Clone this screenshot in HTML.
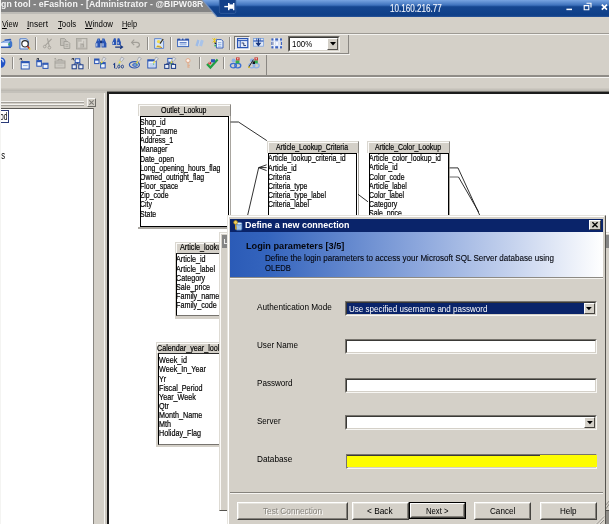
<!DOCTYPE html>
<html><head><meta charset="utf-8"><title>Define a new connection</title>
<style>
html,body{margin:0;padding:0;}
body{width:609px;height:524px;overflow:hidden;position:relative;background:#d4d0c8;font-family:"Liberation Sans",sans-serif;font-size:9px;color:#000;}
div,span{box-sizing:border-box;}
svg{position:absolute;overflow:visible;}
</style></head><body>
<div style="position:absolute;left:0;top:0;width:609px;height:524px;overflow:hidden;will-change:transform;">
<div style="position:absolute;left:0px;top:0px;width:609px;height:12px;background:#848484;"></div>
<div style="position:absolute;left:0px;top:12px;width:609px;height:2px;background:#bdbbb6;"></div>
<span id="t0" style="position:absolute;left:1px;top:0.46px;font-size:8.6px;line-height:9.89px;font-weight:bold;color:#f4f4f4;white-space:nowrap;transform-origin:0 0;transform:scaleX(1.0142);letter-spacing:0.1px;">gn tool - eFashion - [Administrator - @BIPW08R</span>
<span id="t1" style="position:absolute;left:2px;top:19.35px;font-size:9.3px;line-height:10.70px;font-weight:normal;color:#000;white-space:nowrap;transform-origin:0 0;transform:scaleX(0.8000);"><u>V</u>iew</span>
<span id="t2" style="position:absolute;left:27px;top:19.35px;font-size:9.3px;line-height:10.70px;font-weight:normal;color:#000;white-space:nowrap;transform-origin:0 0;transform:scaleX(0.9026);"><u>I</u>nsert</span>
<span id="t3" style="position:absolute;left:58px;top:19.35px;font-size:9.3px;line-height:10.70px;font-weight:normal;color:#000;white-space:nowrap;transform-origin:0 0;transform:scaleX(0.8288);"><u>T</u>ools</span>
<span id="t4" style="position:absolute;left:85px;top:19.35px;font-size:9.3px;line-height:10.70px;font-weight:normal;color:#000;white-space:nowrap;transform-origin:0 0;transform:scaleX(0.8465);"><u>W</u>indow</span>
<span id="t5" style="position:absolute;left:122px;top:19.35px;font-size:9.3px;line-height:10.70px;font-weight:normal;color:#000;white-space:nowrap;transform-origin:0 0;transform:scaleX(0.7837);"><u>H</u>elp</span>
<div style="position:absolute;left:0px;top:33px;width:609px;height:1px;background:#9d9a94;"></div>
<div style="position:absolute;left:0px;top:34px;width:609px;height:1px;background:#f4f3f0;"></div>
<div style="position:absolute;left:-2px;top:35px;width:351px;height:19px;border-right:1px solid #8a8782;border-bottom:1px solid #8a8782;"></div>
<div style="position:absolute;left:-2px;top:54px;width:352px;height:1px;background:#f4f3f0;"></div>
<div style="position:absolute;left:-2px;top:55px;width:269px;height:20px;border-right:1px solid #8a8782;"></div>
<div style="position:absolute;left:0px;top:75px;width:609px;height:2px;background:#8f8c87;"></div>
<div style="position:absolute;left:0px;top:77px;width:609px;height:1px;background:#f6f5f2;"></div>
<div style="position:absolute;left:0px;top:88px;width:609px;height:3px;background:linear-gradient(#d0ccc4,#b8b5ae);"></div>
<div style="position:absolute;left:0px;top:91px;width:107px;height:1.5px;background:#c4c1ba;"></div>
<div style="position:absolute;left:107px;top:91px;width:502px;height:2px;background:#77756f;"></div>
<div style="position:absolute;left:35px;top:36.6px;width:1px;height:13px;background:#8f8c87;"></div>
<div style="position:absolute;left:36px;top:36.6px;width:1px;height:13px;background:#f8f7f4;"></div>
<div style="position:absolute;left:146.5px;top:36.6px;width:1px;height:13px;background:#8f8c87;"></div>
<div style="position:absolute;left:147.5px;top:36.6px;width:1px;height:13px;background:#f8f7f4;"></div>
<div style="position:absolute;left:170.3px;top:36.6px;width:1px;height:13px;background:#8f8c87;"></div>
<div style="position:absolute;left:171.3px;top:36.6px;width:1px;height:13px;background:#f8f7f4;"></div>
<div style="position:absolute;left:229.3px;top:36.6px;width:1px;height:13px;background:#8f8c87;"></div>
<div style="position:absolute;left:230.3px;top:36.6px;width:1px;height:13px;background:#f8f7f4;"></div>
<div style="position:absolute;left:11.6px;top:57.4px;width:1px;height:12px;background:#8f8c87;"></div>
<div style="position:absolute;left:12.6px;top:57.4px;width:1px;height:12px;background:#f8f7f4;"></div>
<div style="position:absolute;left:88px;top:57.4px;width:1px;height:12px;background:#8f8c87;"></div>
<div style="position:absolute;left:89px;top:57.4px;width:1px;height:12px;background:#f8f7f4;"></div>
<div style="position:absolute;left:198.8px;top:57.4px;width:1px;height:12px;background:#8f8c87;"></div>
<div style="position:absolute;left:199.8px;top:57.4px;width:1px;height:12px;background:#f8f7f4;"></div>
<div style="position:absolute;left:223.2px;top:57.4px;width:1px;height:12px;background:#8f8c87;"></div>
<div style="position:absolute;left:224.2px;top:57.4px;width:1px;height:12px;background:#f8f7f4;"></div>
<div style="position:absolute;left:288px;top:36px;width:52px;height:16px;background:#fff;border:1px solid;border-color:#6f6d68 #f2f1ee #f2f1ee #6f6d68;"></div>
<div style="position:absolute;left:289px;top:37px;width:50px;height:14px;border:1px solid;border-color:#3c3b38 #d4d0c8 #d4d0c8 #3c3b38;"></div>
<div style="position:absolute;left:327px;top:38px;width:11px;height:12px;background:#d4d0c8;border:1px solid;border-color:#fff #55534f #55534f #fff;"></div>
<svg style="left:330px;top:42px" width="6" height="4"><path d="M0 0H6L3 3.4Z" fill="#000"/></svg>
<span id="t6" style="position:absolute;left:292px;top:38.53px;font-size:9px;line-height:10.35px;font-weight:normal;color:#000;white-space:nowrap;transform-origin:0 0;transform:scaleX(0.8771);">100%</span>
<div style="position:absolute;left:233.8px;top:35.6px;width:16.4px;height:14.8px;background:#e7e8ec;border:1px solid;border-color:#77756f #fbfaf8 #fbfaf8 #77756f;"></div>
<div style="position:absolute;left:0px;top:93px;width:104px;height:431px;background:#d4d0c8;"></div>
<div style="position:absolute;left:0px;top:100.6px;width:84px;height:2.4px;background:#f3f2ef;border-bottom:1px solid #a3a09a;"></div>
<div style="position:absolute;left:0px;top:104px;width:84px;height:2.4px;background:#f3f2ef;border-bottom:1px solid #a3a09a;"></div>
<div style="position:absolute;left:87px;top:98px;width:9px;height:9px;border:1px solid;border-color:#f6f5f2 #6e6c67 #6e6c67 #f6f5f2;"></div>
<svg style="left:89px;top:100px" width="5" height="5"><path d="M0.3 0.3L4.7 4.7M4.7 0.3L0.3 4.7" stroke="#7d7b76" stroke-width="1.1"/></svg>
<div style="position:absolute;left:-2px;top:108px;width:96px;height:420px;background:#fff;border:1px solid #8a8782;border-top-color:#5c5a56;"></div>
<div style="position:absolute;left:-2px;top:109.6px;width:11.2px;height:13.4px;background:#fff;border:1px solid #2a3a78;"></div>
<span id="t7" style="position:absolute;left:0.3px;top:110.27px;font-size:11px;line-height:12.65px;font-weight:normal;color:#000;white-space:nowrap;transform-origin:0 0;transform:scaleX(0.6041);">od</span>
<span id="t8" style="position:absolute;left:-0.6px;top:149.75px;font-size:10px;line-height:11.50px;font-weight:normal;color:#000;white-space:nowrap;transform-origin:0 0;transform:scaleX(0.7711);">ıs</span>
<div style="position:absolute;left:104px;top:93px;width:1px;height:431px;background:#f6f5f2;"></div>
<div style="position:absolute;left:105px;top:93px;width:2px;height:431px;background:#cbc7bf;"></div>
<div style="position:absolute;left:107px;top:92px;width:510px;height:440px;background:#fff;border:2px solid #1c1c1c;"></div>
<div style="position:absolute;left:138px;top:103.5px;width:92.5px;height:125.6px;overflow:hidden;"><div style="position:absolute;left:0;top:0;width:92.5px;height:12.5px;background:#d4d0c8;border-left:1px solid #dad7d0;border-top:1px solid #dad7d0;border-right:1px solid #8a8782;box-shadow:inset 1px 1px 0 #fbfaf8;"></div><div style="position:absolute;left:2px;top:12.5px;width:89.4px;height:111.1px;background:#fff;border:1px solid #000;border-width:1.3px 1px 1px 1.5px;"></div><div style="position:absolute;left:0;top:123.6px;width:92.5px;height:1.5px;background:#a9a6a0;"></div><div style="position:absolute;left:91.5px;top:12.5px;width:1.3px;height:112.1px;background:#a9a6a0;"></div></div>
<span id="t9" style="position:absolute;left:160.5px;top:104.98px;font-size:9px;line-height:10.35px;font-weight:normal;color:#000;white-space:nowrap;transform-origin:0 0;transform:scaleX(0.7772);-webkit-text-stroke:0.2px #000;">Outlet_Lookup</span>
<span id="t10" style="position:absolute;left:140.2px;top:117.03px;font-size:9px;line-height:10.35px;font-weight:normal;color:#000;white-space:nowrap;transform-origin:0 0;transform:scaleX(0.7720);-webkit-text-stroke:0.2px #000;">Shop_id</span>
<span id="t11" style="position:absolute;left:140.2px;top:126.17px;font-size:9px;line-height:10.35px;font-weight:normal;color:#000;white-space:nowrap;transform-origin:0 0;transform:scaleX(0.7720);-webkit-text-stroke:0.2px #000;">Shop_name</span>
<span id="t12" style="position:absolute;left:140.2px;top:135.32px;font-size:9px;line-height:10.35px;font-weight:normal;color:#000;white-space:nowrap;transform-origin:0 0;transform:scaleX(0.7720);-webkit-text-stroke:0.2px #000;">Address_1</span>
<span id="t13" style="position:absolute;left:140.2px;top:144.47px;font-size:9px;line-height:10.35px;font-weight:normal;color:#000;white-space:nowrap;transform-origin:0 0;transform:scaleX(0.7720);-webkit-text-stroke:0.2px #000;">Manager</span>
<span id="t14" style="position:absolute;left:140.2px;top:153.62px;font-size:9px;line-height:10.35px;font-weight:normal;color:#000;white-space:nowrap;transform-origin:0 0;transform:scaleX(0.7720);-webkit-text-stroke:0.2px #000;">Date_open</span>
<span id="t15" style="position:absolute;left:140.2px;top:162.77px;font-size:9px;line-height:10.35px;font-weight:normal;color:#000;white-space:nowrap;transform-origin:0 0;transform:scaleX(0.7720);-webkit-text-stroke:0.2px #000;">Long_opening_hours_flag</span>
<span id="t16" style="position:absolute;left:140.2px;top:171.93px;font-size:9px;line-height:10.35px;font-weight:normal;color:#000;white-space:nowrap;transform-origin:0 0;transform:scaleX(0.7720);-webkit-text-stroke:0.2px #000;">Owned_outright_flag</span>
<span id="t17" style="position:absolute;left:140.2px;top:181.07px;font-size:9px;line-height:10.35px;font-weight:normal;color:#000;white-space:nowrap;transform-origin:0 0;transform:scaleX(0.7720);-webkit-text-stroke:0.2px #000;">Floor_space</span>
<span id="t18" style="position:absolute;left:140.2px;top:190.22px;font-size:9px;line-height:10.35px;font-weight:normal;color:#000;white-space:nowrap;transform-origin:0 0;transform:scaleX(0.7720);-webkit-text-stroke:0.2px #000;">Zip_code</span>
<span id="t19" style="position:absolute;left:140.2px;top:199.38px;font-size:9px;line-height:10.35px;font-weight:normal;color:#000;white-space:nowrap;transform-origin:0 0;transform:scaleX(0.7720);-webkit-text-stroke:0.2px #000;">City</span>
<span id="t20" style="position:absolute;left:140.2px;top:208.52px;font-size:9px;line-height:10.35px;font-weight:normal;color:#000;white-space:nowrap;transform-origin:0 0;transform:scaleX(0.7720);-webkit-text-stroke:0.2px #000;">State</span>
<div style="position:absolute;left:266.6px;top:140.5px;width:92px;height:91px;overflow:hidden;"><div style="position:absolute;left:0;top:0;width:92px;height:12.5px;background:#d4d0c8;border-left:1px solid #dad7d0;border-top:1px solid #dad7d0;border-right:1px solid #8a8782;box-shadow:inset 1px 1px 0 #fbfaf8;"></div><div style="position:absolute;left:1.5px;top:12.5px;width:89.4px;height:76.5px;background:#fff;border:1px solid #000;border-width:1.3px 1px 1px 1.5px;"></div><div style="position:absolute;left:0;top:89px;width:92px;height:1.5px;background:#a9a6a0;"></div><div style="position:absolute;left:91px;top:12.5px;width:1.3px;height:77.5px;background:#a9a6a0;"></div></div>
<span id="t21" style="position:absolute;left:276px;top:141.97px;font-size:9px;line-height:10.35px;font-weight:normal;color:#000;white-space:nowrap;transform-origin:0 0;transform:scaleX(0.7697);-webkit-text-stroke:0.2px #000;">Article_Lookup_Criteria</span>
<span id="t22" style="position:absolute;left:268.3px;top:153.42px;font-size:9px;line-height:10.35px;font-weight:normal;color:#000;white-space:nowrap;transform-origin:0 0;transform:scaleX(0.7720);-webkit-text-stroke:0.2px #000;">Article_lookup_criteria_id</span>
<span id="t23" style="position:absolute;left:268.3px;top:162.57px;font-size:9px;line-height:10.35px;font-weight:normal;color:#000;white-space:nowrap;transform-origin:0 0;transform:scaleX(0.7720);-webkit-text-stroke:0.2px #000;">Article_id</span>
<span id="t24" style="position:absolute;left:268.3px;top:171.72px;font-size:9px;line-height:10.35px;font-weight:normal;color:#000;white-space:nowrap;transform-origin:0 0;transform:scaleX(0.7720);-webkit-text-stroke:0.2px #000;">Criteria</span>
<span id="t25" style="position:absolute;left:268.3px;top:180.88px;font-size:9px;line-height:10.35px;font-weight:normal;color:#000;white-space:nowrap;transform-origin:0 0;transform:scaleX(0.7720);-webkit-text-stroke:0.2px #000;">Criteria_type</span>
<span id="t26" style="position:absolute;left:268.3px;top:190.02px;font-size:9px;line-height:10.35px;font-weight:normal;color:#000;white-space:nowrap;transform-origin:0 0;transform:scaleX(0.7720);-webkit-text-stroke:0.2px #000;">Criteria_type_label</span>
<span id="t27" style="position:absolute;left:268.3px;top:199.17px;font-size:9px;line-height:10.35px;font-weight:normal;color:#000;white-space:nowrap;transform-origin:0 0;transform:scaleX(0.7720);-webkit-text-stroke:0.2px #000;">Criteria_label</span>
<div style="position:absolute;left:367.2px;top:140.5px;width:82.5px;height:91px;overflow:hidden;"><div style="position:absolute;left:0;top:0;width:82.5px;height:12.5px;background:#d4d0c8;border-left:1px solid #dad7d0;border-top:1px solid #dad7d0;border-right:1px solid #8a8782;box-shadow:inset 1px 1px 0 #fbfaf8;"></div><div style="position:absolute;left:1.5px;top:12.5px;width:79.9px;height:76.5px;background:#fff;border:1px solid #000;border-width:1.3px 1px 1px 1.5px;"></div><div style="position:absolute;left:0;top:89px;width:82.5px;height:1.5px;background:#a9a6a0;"></div><div style="position:absolute;left:81.5px;top:12.5px;width:1.3px;height:77.5px;background:#a9a6a0;"></div></div>
<span id="t28" style="position:absolute;left:374.8px;top:141.97px;font-size:9px;line-height:10.35px;font-weight:normal;color:#000;white-space:nowrap;transform-origin:0 0;transform:scaleX(0.7669);-webkit-text-stroke:0.2px #000;">Article_Color_Lookup</span>
<span id="t29" style="position:absolute;left:368.9px;top:153.32px;font-size:9px;line-height:10.35px;font-weight:normal;color:#000;white-space:nowrap;transform-origin:0 0;transform:scaleX(0.7720);-webkit-text-stroke:0.2px #000;">Article_color_lookup_id</span>
<span id="t30" style="position:absolute;left:368.9px;top:162.47px;font-size:9px;line-height:10.35px;font-weight:normal;color:#000;white-space:nowrap;transform-origin:0 0;transform:scaleX(0.7720);-webkit-text-stroke:0.2px #000;">Article_id</span>
<span id="t31" style="position:absolute;left:368.9px;top:171.62px;font-size:9px;line-height:10.35px;font-weight:normal;color:#000;white-space:nowrap;transform-origin:0 0;transform:scaleX(0.7720);-webkit-text-stroke:0.2px #000;">Color_code</span>
<span id="t32" style="position:absolute;left:368.9px;top:180.77px;font-size:9px;line-height:10.35px;font-weight:normal;color:#000;white-space:nowrap;transform-origin:0 0;transform:scaleX(0.7720);-webkit-text-stroke:0.2px #000;">Article_label</span>
<span id="t33" style="position:absolute;left:368.9px;top:189.92px;font-size:9px;line-height:10.35px;font-weight:normal;color:#000;white-space:nowrap;transform-origin:0 0;transform:scaleX(0.7720);-webkit-text-stroke:0.2px #000;">Color_label</span>
<span id="t34" style="position:absolute;left:368.9px;top:199.07px;font-size:9px;line-height:10.35px;font-weight:normal;color:#000;white-space:nowrap;transform-origin:0 0;transform:scaleX(0.7720);-webkit-text-stroke:0.2px #000;">Category</span>
<span id="t35" style="position:absolute;left:368.9px;top:208.22px;font-size:9px;line-height:10.35px;font-weight:normal;color:#000;white-space:nowrap;transform-origin:0 0;transform:scaleX(0.7720);-webkit-text-stroke:0.2px #000;">Sale_price</span>
<div style="position:absolute;left:174.8px;top:241.5px;width:45.2px;height:78px;overflow:hidden;"><div style="position:absolute;left:0;top:0;width:60px;height:11.5px;background:#d4d0c8;border-left:1px solid #dad7d0;border-top:1px solid #dad7d0;border-right:1px solid #8a8782;box-shadow:inset 1px 1px 0 #fbfaf8;"></div><div style="position:absolute;left:0;top:11.5px;width:60px;height:65.5px;background:#d4d0c8;"></div><div style="position:absolute;left:1.5px;top:11.5px;width:57.4px;height:63.3px;background:#fff;border:1px solid #000;border-color:#2a2a2a #000 #77746f #000;"></div></div>
<div style="position:absolute;left:174.8px;top:241.5px;width:45.2px;height:11.5px;overflow:hidden;"><span id="t36" style="position:absolute;left:5.0px;top:0.98px;font-size:9px;line-height:10.35px;font-weight:normal;color:#000;white-space:nowrap;transform-origin:0 0;transform:scaleX(0.8000);-webkit-text-stroke:0.2px #000;">Article_lookup</span></div>
<div style="position:absolute;left:173.8px;top:253.60px;width:46.2px;height:12px;overflow:hidden;"><span id="t37" style="position:absolute;left:2.7px;top:0.83px;font-size:9px;line-height:10.35px;font-weight:normal;color:#000;white-space:nowrap;transform-origin:0 0;transform:scaleX(0.8000);-webkit-text-stroke:0.2px #000;">Article_id</span></div>
<div style="position:absolute;left:173.8px;top:262.75px;width:46.2px;height:12px;overflow:hidden;"><span id="t38" style="position:absolute;left:2.7px;top:0.83px;font-size:9px;line-height:10.35px;font-weight:normal;color:#000;white-space:nowrap;transform-origin:0 0;transform:scaleX(0.8000);-webkit-text-stroke:0.2px #000;">Article_label</span></div>
<div style="position:absolute;left:173.8px;top:271.90px;width:46.2px;height:12px;overflow:hidden;"><span id="t39" style="position:absolute;left:2.7px;top:0.83px;font-size:9px;line-height:10.35px;font-weight:normal;color:#000;white-space:nowrap;transform-origin:0 0;transform:scaleX(0.8000);-webkit-text-stroke:0.2px #000;">Category</span></div>
<div style="position:absolute;left:173.8px;top:281.05px;width:46.2px;height:12px;overflow:hidden;"><span id="t40" style="position:absolute;left:2.7px;top:0.83px;font-size:9px;line-height:10.35px;font-weight:normal;color:#000;white-space:nowrap;transform-origin:0 0;transform:scaleX(0.8000);-webkit-text-stroke:0.2px #000;">Sale_price</span></div>
<div style="position:absolute;left:173.8px;top:290.20px;width:46.2px;height:12px;overflow:hidden;"><span id="t41" style="position:absolute;left:2.7px;top:0.83px;font-size:9px;line-height:10.35px;font-weight:normal;color:#000;white-space:nowrap;transform-origin:0 0;transform:scaleX(0.8000);-webkit-text-stroke:0.2px #000;">Family_name</span></div>
<div style="position:absolute;left:173.8px;top:299.35px;width:46.2px;height:12px;overflow:hidden;"><span id="t42" style="position:absolute;left:2.7px;top:0.83px;font-size:9px;line-height:10.35px;font-weight:normal;color:#000;white-space:nowrap;transform-origin:0 0;transform:scaleX(0.8000);-webkit-text-stroke:0.2px #000;">Family_code</span></div>
<div style="position:absolute;left:156.4px;top:342.4px;width:63.6px;height:106px;overflow:hidden;"><div style="position:absolute;left:0;top:0;width:80px;height:10.8px;background:#d4d0c8;border-left:1px solid #dad7d0;border-top:1px solid #dad7d0;border-right:1px solid #8a8782;box-shadow:inset 1px 1px 0 #fbfaf8;"></div><div style="position:absolute;left:0;top:10.8px;width:80px;height:94.2px;background:#d4d0c8;"></div><div style="position:absolute;left:2px;top:10.8px;width:76.9px;height:92.0px;background:#fff;border:1px solid #000;border-color:#2a2a2a #000 #77746f #000;"></div></div>
<div style="position:absolute;left:156.4px;top:342.4px;width:63.6px;height:10.8px;overflow:hidden;"><span id="t43" style="position:absolute;left:0.9000000000000057px;top:0.63px;font-size:9px;line-height:10.35px;font-weight:normal;color:#000;white-space:nowrap;transform-origin:0 0;transform:scaleX(0.8000);-webkit-text-stroke:0.2px #000;">Calendar_year_lookup</span></div>
<div style="position:absolute;left:155.4px;top:354.40px;width:64.6px;height:12px;overflow:hidden;"><span id="t44" style="position:absolute;left:3.2px;top:0.83px;font-size:9px;line-height:10.35px;font-weight:normal;color:#000;white-space:nowrap;transform-origin:0 0;transform:scaleX(0.8000);-webkit-text-stroke:0.2px #000;">Week_id</span></div>
<div style="position:absolute;left:155.4px;top:363.55px;width:64.6px;height:12px;overflow:hidden;"><span id="t45" style="position:absolute;left:3.2px;top:0.83px;font-size:9px;line-height:10.35px;font-weight:normal;color:#000;white-space:nowrap;transform-origin:0 0;transform:scaleX(0.8000);-webkit-text-stroke:0.2px #000;">Week_In_Year</span></div>
<div style="position:absolute;left:155.4px;top:372.70px;width:64.6px;height:12px;overflow:hidden;"><span id="t46" style="position:absolute;left:3.2px;top:0.83px;font-size:9px;line-height:10.35px;font-weight:normal;color:#000;white-space:nowrap;transform-origin:0 0;transform:scaleX(0.8000);-webkit-text-stroke:0.2px #000;">Yr</span></div>
<div style="position:absolute;left:155.4px;top:381.85px;width:64.6px;height:12px;overflow:hidden;"><span id="t47" style="position:absolute;left:3.2px;top:0.83px;font-size:9px;line-height:10.35px;font-weight:normal;color:#000;white-space:nowrap;transform-origin:0 0;transform:scaleX(0.8000);-webkit-text-stroke:0.2px #000;">Fiscal_Period</span></div>
<div style="position:absolute;left:155.4px;top:391.00px;width:64.6px;height:12px;overflow:hidden;"><span id="t48" style="position:absolute;left:3.2px;top:0.83px;font-size:9px;line-height:10.35px;font-weight:normal;color:#000;white-space:nowrap;transform-origin:0 0;transform:scaleX(0.8000);-webkit-text-stroke:0.2px #000;">Year_Week</span></div>
<div style="position:absolute;left:155.4px;top:400.15px;width:64.6px;height:12px;overflow:hidden;"><span id="t49" style="position:absolute;left:3.2px;top:0.83px;font-size:9px;line-height:10.35px;font-weight:normal;color:#000;white-space:nowrap;transform-origin:0 0;transform:scaleX(0.8000);-webkit-text-stroke:0.2px #000;">Qtr</span></div>
<div style="position:absolute;left:155.4px;top:409.30px;width:64.6px;height:12px;overflow:hidden;"><span id="t50" style="position:absolute;left:3.2px;top:0.83px;font-size:9px;line-height:10.35px;font-weight:normal;color:#000;white-space:nowrap;transform-origin:0 0;transform:scaleX(0.8000);-webkit-text-stroke:0.2px #000;">Month_Name</span></div>
<div style="position:absolute;left:155.4px;top:418.45px;width:64.6px;height:12px;overflow:hidden;"><span id="t51" style="position:absolute;left:3.2px;top:0.83px;font-size:9px;line-height:10.35px;font-weight:normal;color:#000;white-space:nowrap;transform-origin:0 0;transform:scaleX(0.8000);-webkit-text-stroke:0.2px #000;">Mth</span></div>
<div style="position:absolute;left:155.4px;top:427.60px;width:64.6px;height:12px;overflow:hidden;"><span id="t52" style="position:absolute;left:3.2px;top:0.83px;font-size:9px;line-height:10.35px;font-weight:normal;color:#000;white-space:nowrap;transform-origin:0 0;transform:scaleX(0.8000);-webkit-text-stroke:0.2px #000;">Holiday_Flag</span></div>
<svg style="left:0;top:0" width="609" height="524" fill="none" stroke="#1a1a1a" stroke-width="0.9">
<path d="M230.5 122H238.5L266.8 140.6"/>
<path d="M266.6 164.8L258.7 167.6L266.6 170.6M258.7 167.6H266.6M258.7 167.6L247 218"/>
<path d="M358 194.3L368 201.8"/>
<path d="M449.5 167.9H458L481 218"/>
<path d="M449.5 177H458.5" stroke="#555"/><path d="M458.5 177L478.7 212"/>
</svg>
<div style="position:absolute;left:219px;top:232px;width:400px;height:279px;background:#d4d0c8;border-left:1px solid #dedbd4;border-top:1px solid #dedbd4;border-bottom:1.5px solid #55534f;box-shadow:inset 1px 1px 0 #fbfaf8;"></div>
<div style="position:absolute;left:221.8px;top:235px;width:395px;height:13.4px;background:#858585;"></div>
<div style="position:absolute;left:223.7px;top:239px;width:1.5px;height:5.3px;background:#ececec;"></div>
<div style="position:absolute;left:223.7px;top:243.2px;width:3.2px;height:1.2px;background:#ececec;"></div>
<div style="position:absolute;left:606px;top:511px;width:4px;height:14px;background:#8e8c88;"></div>
<svg style="left:605px;top:500px" width="5" height="11"><path d="M0 10L5 3M0 6L5 0" stroke="#8a8782" stroke-width="1"/></svg>
<div style="position:absolute;left:227.3px;top:215.2px;width:378.3px;height:320px;background:#d4d0c8;border-left:1px solid #e6e4de;border-top:1px solid #e6e4de;border-right:1.2px solid #55534e;"></div>
<div style="position:absolute;left:228.3px;top:216.2px;width:375.90000000000003px;height:320px;border-left:1px solid #fff;border-top:1px solid #fff;"></div>
<div style="position:absolute;left:230.3px;top:219px;width:372.8px;height:12.7px;background:#0a246a;"></div>
<span id="t53" style="position:absolute;left:244.8px;top:220.01px;font-size:9.2px;line-height:10.58px;font-weight:bold;color:#fff;white-space:nowrap;transform-origin:0 0;transform:scaleX(0.9701);">Define a new connection</span>
<svg style="left:232.5px;top:219.6px" width="10" height="11" viewBox="0 0 10 11">
<rect x="3" y="3.2" width="6" height="7" rx="1.2" fill="#9fc4ea" stroke="#2d5ea8" stroke-width="0.8"/>
<ellipse cx="6" cy="3.6" rx="3" ry="1.3" fill="#d8e9fa" stroke="#2d5ea8" stroke-width="0.6"/>
<circle cx="2.6" cy="2.4" r="1.9" fill="#f3d35a" stroke="#a98218" stroke-width="0.7"/>
<path d="M2.6 4.2V9.6M2.6 7.3H4M2.6 9H4" stroke="#c9a02a" stroke-width="1.1" fill="none"/>
</svg>
<div style="position:absolute;left:589.3px;top:220.2px;width:11.9px;height:9.7px;background:#d4d0c8;border:1px solid;border-color:#fff #404040 #404040 #fff;"></div>
<svg style="left:592.3px;top:222.2px" width="6" height="5.6"><path d="M0.4 0.3L5.6 5.3M5.6 0.3L0.4 5.3" stroke="#000" stroke-width="1.35"/></svg>
<div style="position:absolute;left:230.3px;top:232.3px;width:372.8px;height:44.5px;background:linear-gradient(90deg,#2b5bb7 0%,#3464bd 10%,#8ba6dc 50%,#c6d3ee 76%,#ffffff 100%);"></div>
<div style="position:absolute;left:230.3px;top:276.8px;width:372.8px;height:1px;background:#8d8a84;"></div>
<div style="position:absolute;left:230.3px;top:277.8px;width:372.8px;height:1px;background:#f4f3ef;"></div>
<span id="t54" style="position:absolute;left:245.6px;top:239.97px;font-size:9.8px;line-height:11.27px;font-weight:bold;color:#05070f;white-space:nowrap;transform-origin:0 0;transform:scaleX(0.9364);">Login parameters [3/5]</span>
<span id="t55" style="position:absolute;left:265.2px;top:252.90px;font-size:9.4px;line-height:10.81px;font-weight:normal;color:#05070f;white-space:nowrap;transform-origin:0 0;transform:scaleX(0.8594);-webkit-text-stroke:0.12px #05070f;">Define the login parameters to access your Microsoft SQL Server database using</span>
<span id="t56" style="position:absolute;left:265.4px;top:263.00px;font-size:9.4px;line-height:10.81px;font-weight:normal;color:#05070f;white-space:nowrap;transform-origin:0 0;transform:scaleX(0.8114);-webkit-text-stroke:0.12px #05070f;">OLEDB</span>
<span id="t57" style="position:absolute;left:257.3px;top:301.50px;font-size:9.4px;line-height:10.81px;font-weight:normal;color:#000;white-space:nowrap;transform-origin:0 0;transform:scaleX(0.8750);">Authentication Mode</span>
<span id="t58" style="position:absolute;left:257.3px;top:339.90px;font-size:9.4px;line-height:10.81px;font-weight:normal;color:#000;white-space:nowrap;transform-origin:0 0;transform:scaleX(0.8649);">User Name</span>
<span id="t59" style="position:absolute;left:257.3px;top:378.40px;font-size:9.4px;line-height:10.81px;font-weight:normal;color:#000;white-space:nowrap;transform-origin:0 0;transform:scaleX(0.8622);">Password</span>
<span id="t60" style="position:absolute;left:257.3px;top:416.20px;font-size:9.4px;line-height:10.81px;font-weight:normal;color:#000;white-space:nowrap;transform-origin:0 0;transform:scaleX(0.8543);">Server</span>
<span id="t61" style="position:absolute;left:257.3px;top:454.30px;font-size:9.4px;line-height:10.81px;font-weight:normal;color:#000;white-space:nowrap;transform-origin:0 0;transform:scaleX(0.8794);">Database</span>
<div style="position:absolute;left:345px;top:301.4px;width:251.6px;height:14.2px;background:#fff;border:1px solid;border-color:#77746e #f7f6f3 #f7f6f3 #77746e;"></div>
<div style="position:absolute;left:346px;top:302.4px;width:249.6px;height:12.2px;border:1px solid;border-color:#3a3936 #d4d0c8 #d4d0c8 #3a3936;"></div>
<div style="position:absolute;left:347px;top:303.4px;width:236.5px;height:10.4px;background:#0a246a;"></div>
<span id="t62" style="position:absolute;left:348.7px;top:303.50px;font-size:9.4px;line-height:10.81px;font-weight:normal;color:#fff;white-space:nowrap;transform-origin:0 0;transform:scaleX(0.8567);">Use specified username and password</span>
<div style="position:absolute;left:583.6px;top:303.2px;width:11.4px;height:10.8px;background:#d4d0c8;border:1px solid;border-color:#fff #45433f #45433f #fff;"></div>
<svg style="left:586.40px;top:307.20px" width="6" height="4"><path d="M0 0H5.8L2.9 3.2Z" fill="#000"/></svg>
<div style="position:absolute;left:345px;top:339px;width:251.6px;height:15px;background:#fff;border:1px solid;border-color:#77746e #f7f6f3 #f7f6f3 #77746e;"></div>
<div style="position:absolute;left:346px;top:340px;width:249.6px;height:13px;border:1px solid;border-color:#3a3936 #d4d0c8 #d4d0c8 #3a3936;"></div>
<div style="position:absolute;left:345px;top:378px;width:251.6px;height:14.8px;background:#fff;border:1px solid;border-color:#77746e #f7f6f3 #f7f6f3 #77746e;"></div>
<div style="position:absolute;left:346px;top:379px;width:249.6px;height:12.8px;border:1px solid;border-color:#3a3936 #d4d0c8 #d4d0c8 #3a3936;"></div>
<div style="position:absolute;left:345px;top:415.3px;width:251.6px;height:14.6px;background:#fff;border:1px solid;border-color:#77746e #f7f6f3 #f7f6f3 #77746e;"></div>
<div style="position:absolute;left:346px;top:416.3px;width:249.6px;height:12.6px;border:1px solid;border-color:#3a3936 #d4d0c8 #d4d0c8 #3a3936;"></div>
<div style="position:absolute;left:584px;top:417px;width:11px;height:11px;background:#d4d0c8;border:1px solid;border-color:#fff #45433f #45433f #fff;"></div>
<svg style="left:586.60px;top:421.10px" width="6" height="4"><path d="M0 0H5.8L2.9 3.2Z" fill="#000"/></svg>
<div style="position:absolute;left:345.5px;top:453.8px;width:251.3px;height:15px;background:#ffff00;border:1px solid;border-color:#77746e #f7f6f3 #f7f6f3 #77746e;"></div>
<div style="position:absolute;left:346.5px;top:454.8px;width:249.3px;height:13px;border:1px solid;border-color:#3a3936 #d4d0c8 #d4d0c8 #3a3936;"></div>
<div style="position:absolute;left:347.4px;top:455.8px;width:249.6px;height:11.6px;background:#fdfd02;"></div>
<div style="position:absolute;left:540px;top:454.8px;width:57.4px;height:2px;background:#fdfd02;"></div>
<div style="position:absolute;left:230.3px;top:492px;width:372.5px;height:1px;background:#85827c;"></div>
<div style="position:absolute;left:230.3px;top:493px;width:372.5px;height:1px;background:#f6f5f2;"></div>
<div style="position:absolute;left:237.3px;top:502px;width:110.7px;height:17.5px;background:#d4d0c8;border:1px solid;border-color:#fff #45433f #45433f #fff;"></div>
<div style="position:absolute;left:238.3px;top:503px;width:108.7px;height:15.5px;border:1px solid;border-color:#e4e2dc #85827c #85827c #e4e2dc;"></div>
<span id="t63" style="position:absolute;left:263.95000000000005px;top:506.85px;font-size:9.4px;line-height:10.81px;font-weight:normal;color:#fff;white-space:nowrap;transform-origin:0 0;transform:scaleX(0.8775);">Test Connection</span>
<span id="t64" style="position:absolute;left:263.15000000000003px;top:506.05px;font-size:9.4px;line-height:10.81px;font-weight:normal;color:#85827c;white-space:nowrap;transform-origin:0 0;transform:scaleX(0.8775);">Test Connection</span>
<div style="position:absolute;left:352px;top:502px;width:56.5px;height:17.5px;background:#d4d0c8;border:1px solid;border-color:#fff #45433f #45433f #fff;"></div>
<div style="position:absolute;left:353px;top:503px;width:54.5px;height:15.5px;border:1px solid;border-color:#e4e2dc #85827c #85827c #e4e2dc;"></div>
<span id="t65" style="position:absolute;left:367.4px;top:506.05px;font-size:9.4px;line-height:10.81px;font-weight:normal;color:#000;white-space:nowrap;transform-origin:0 0;transform:scaleX(0.8886);">&lt; Back</span>
<div style="position:absolute;left:409px;top:501.6px;width:57.4px;height:17.9px;border:1px solid #000;"></div>
<div style="position:absolute;left:410px;top:502.6px;width:55.4px;height:15.899999999999999px;background:#d4d0c8;border:1px solid;border-color:#fff #45433f #45433f #fff;"></div>
<div style="position:absolute;left:411px;top:503.6px;width:53.4px;height:13.899999999999999px;border:1px solid;border-color:#d4d0c8 #85827c #85827c #d4d0c8;"></div>
<span id="t66" style="position:absolute;left:426.45px;top:505.85px;font-size:9.4px;line-height:10.81px;font-weight:normal;color:#000;white-space:nowrap;transform-origin:0 0;transform:scaleX(0.8224);">Next &gt;</span>
<div style="position:absolute;left:474px;top:502px;width:57px;height:17.5px;background:#d4d0c8;border:1px solid;border-color:#fff #45433f #45433f #fff;"></div>
<div style="position:absolute;left:475px;top:503px;width:55px;height:15.5px;border:1px solid;border-color:#e4e2dc #85827c #85827c #e4e2dc;"></div>
<span id="t67" style="position:absolute;left:489.85px;top:506.05px;font-size:9.4px;line-height:10.81px;font-weight:normal;color:#000;white-space:nowrap;transform-origin:0 0;transform:scaleX(0.8668);">Cancel</span>
<div style="position:absolute;left:539.8px;top:502px;width:56.8px;height:17.5px;background:#d4d0c8;border:1px solid;border-color:#fff #45433f #45433f #fff;"></div>
<div style="position:absolute;left:540.8px;top:503px;width:54.8px;height:15.5px;border:1px solid;border-color:#e4e2dc #85827c #85827c #e4e2dc;"></div>
<span id="t68" style="position:absolute;left:559.9px;top:506.05px;font-size:9.4px;line-height:10.81px;font-weight:normal;color:#000;white-space:nowrap;transform-origin:0 0;transform:scaleX(0.8609);">Help</span>
<svg style="left:594px;top:514px" width="10" height="10" fill="none">
<path d="M2.5 10L10 2.5M6 10L10 6" stroke="#8f8c86" stroke-width="1"/>
<path d="M1.5 10L10 1.5M5 10L10 5" stroke="#eceae5" stroke-width="0.7"/></svg>
<svg style="left:0;top:0" width="609" height="18">
<defs><linearGradient id="rg" x1="0" y1="0" x2="0" y2="1">
<stop offset="0" stop-color="#78a4e1"/><stop offset="0.3" stop-color="#3f73bd"/><stop offset="0.4" stop-color="#154690"/><stop offset="0.9" stop-color="#0f3f88"/><stop offset="1" stop-color="#2a559a"/></linearGradient></defs>
<path d="M202.5 0H609V17H217Z" fill="url(#rg)"/><path d="M202.5 0L217 17" stroke="#7b97c4" stroke-width="1.2" opacity="0.8"/>
<rect x="219.4" y="-1" width="16.4" height="14.4" rx="1.5" fill="#123f88" stroke="#33609f" stroke-width="0.8"/>
<path d="M224.3 6.6H228.6" stroke="#fff" stroke-width="1.4"/><rect x="228" y="3" width="1.5" height="7.2" fill="#fff"/><rect x="229" y="4.4" width="4.6" height="4.4" fill="#fff"/><rect x="233" y="3" width="1.4" height="7.2" fill="#f4f8ff"/>
<path d="M566.4 9.4H572" stroke="#fff" stroke-width="1.5"/>
<path d="M586.5 3.2H591V7.4M584.2 5.6H588.8V9.8H584.2Z" stroke="#fff" stroke-width="1.1" fill="none"/>
<path d="M601.8 4.6L607 9.6M607 4.6L601.8 9.6" stroke="#fff" stroke-width="1.7"/>
</svg>
<span id="t69" style="position:absolute;left:389.6px;top:1.79px;font-size:10.8px;line-height:12.42px;font-weight:normal;color:#f1f5fd;white-space:nowrap;transform-origin:0 0;transform:scaleX(0.7502);-webkit-text-stroke:0.15px #f1f5fd;">10.160.216.77</span>
<svg style="left:0px;top:38px" width="13.4" height="11" viewBox="0 0 13.4 11"><path d="M4.4 1.4L10.6 0.8L11.6 2.2L5 3Z" fill="#2b58b6"/><path d="M1 4.6L4.6 2.6L11 2.4L12.2 4.4V8.2L10.6 9.8H1Z" fill="#3f74cc"/><path d="M1 4.8H8.4V8.6H1Z" fill="#eef4fd"/><path d="M1 4.9L5 3L10.4 2.8L8.4 4.9Z" fill="#9dbcec"/><path d="M1 9.4H10.8" stroke="#2b58b6" stroke-width="1.3"/><circle cx="9.2" cy="6.3" r="1" fill="#2fb457"/></svg>
<svg style="left:18.5px;top:37.6px" width="12" height="12.4" viewBox="0 0 12 12.4"><path d="M0.9 0.8H7.2L9.4 2.8V11H0.9Z" fill="#e9f1fc" stroke="#4a78c8" stroke-width="1"/><circle cx="6" cy="5.8" r="3.2" fill="#fdfdff" stroke="#2a2a2a" stroke-width="1.15"/><path d="M8.4 8.2L10.4 10.4" stroke="#c42a12" stroke-width="1.5"/><path d="M10 10.2L11.2 11.4" stroke="#e9c81c" stroke-width="1.4"/></svg>
<svg style="left:43px;top:37.6px" width="9.4" height="11.4" viewBox="0 0 9.4 11.4"><path d="M4.4 0.4L6.4 8.6M8.6 0.8L2 8" stroke="#a5a29b" stroke-width="1.1" fill="none"/><circle cx="1.7" cy="8.6" r="1.3" fill="none" stroke="#a5a29b" stroke-width="1"/><circle cx="6.4" cy="9.6" r="1.4" fill="none" stroke="#a5a29b" stroke-width="1"/></svg>
<svg style="left:60px;top:38px" width="10.5" height="11" viewBox="0 0 10.5 11"><path d="M0.5 0.5H4.5L6 2V7.5H0.5Z" fill="#c2bfb8" stroke="#a29f98" stroke-width="0.9"/><path d="M4 3.5H8L9.8 5.3V10.5H4Z" fill="#cbc8c1" stroke="#a29f98" stroke-width="0.9"/><path d="M5.5 6.5H8.3M5.5 8.3H8.3" stroke="#a29f98" stroke-width="0.7"/></svg>
<svg style="left:76.1px;top:38px" width="11.4" height="11.4" viewBox="0 0 11.4 11.4"><rect x="0.4" y="0.4" width="10.6" height="10.6" fill="#bcb9b2" stroke="#a6a39c" stroke-width="0.8"/><path d="M3 9.6V4.6H6.4V2H9V9.6" fill="none" stroke="#d8d5ce" stroke-width="1.5"/><path d="M5.4 6.4H7.6V9" fill="none" stroke="#a29f98" stroke-width="0.8"/></svg>
<svg style="left:95px;top:37.7px" width="12" height="10.4" viewBox="0 0 12 10.4"><path d="M2.6 0.4H4.8L5.4 4.5V9.6H0.6V5.5Z" fill="#2a55b4"/><path d="M7.2 0.4H9.4L11.4 5.5V9.6H6.6V4.5Z" fill="#2a55b4"/><rect x="5" y="2.6" width="2" height="2.6" fill="#16357e"/><path d="M1.8 5.2V8.6M8 5.2V8.6" stroke="#cfdcf3" stroke-width="1.1"/><path d="M3.3 1.2V3M8 1.2V3" stroke="#7ea3de" stroke-width="0.8"/></svg>
<svg style="left:111.8px;top:37.5px" width="12" height="11" viewBox="0 0 12 11"><path d="M2 0.3H3.7L4.2 3.4V7H0.4V4.2Z" fill="#2a55b4"/><path d="M5.6 0.3H7.3L8.9 4.2V7H5.1V3.4Z" fill="#2a55b4"/><path d="M1.4 4V6.2M6.2 4V6.2" stroke="#cfdcf3" stroke-width="0.9"/><path d="M3.2 9.1H10.2M8.2 7.4L10.6 9.1L8.2 10.8" stroke="#16357e" stroke-width="1.1" fill="none"/></svg>
<svg style="left:130.5px;top:39px" width="9.5" height="8.6" viewBox="0 0 9.5 8.6"><path d="M1 3.4H5.6C8 3.4 8.6 5 8.4 6.2C8.2 7.4 7 8.2 5.4 8.2" fill="none" stroke="#a29f98" stroke-width="1.3"/><path d="M3.2 0.6L0.6 3.4L3.2 6.2" fill="none" stroke="#a29f98" stroke-width="1.2"/></svg>
<svg style="left:154.2px;top:37.7px" width="10.5" height="11" viewBox="0 0 10.5 11"><path d="M0.6 0.6H7L9.6 3V10.4H0.6Z" fill="#d6e5f8" stroke="#4a74c4" stroke-width="0.8"/><circle cx="4.6" cy="3.6" r="1.7" fill="#f1d84c"/><path d="M2 9.4C2 6.4 7.2 6.4 7.2 9.4Z" fill="#f1d84c"/><path d="M9.2 1L6 5.6" stroke="#35311f" stroke-width="1.2"/><path d="M3 8.2L8 9.6" stroke="#b9892d" stroke-width="0.9"/></svg>
<svg style="left:177px;top:38.3px" width="12.4" height="9.2" viewBox="0 0 12.4 9.2"><rect x="0.6" y="1.6" width="11" height="7" fill="#f2f6fd" stroke="#3c66bc" stroke-width="1"/><path d="M0.4 1.6H11.8" stroke="#2a4fa6" stroke-width="2"/><path d="M3.2 0.9H5M6.4 0.9H8.2" stroke="#fff" stroke-width="1"/><path d="M2.6 4.8H9.6" stroke="#2a55b4" stroke-width="1"/><path d="M2.6 6.8H9.6" stroke="#7ea3de" stroke-width="0.9"/></svg>
<svg style="left:195.2px;top:39px" width="9.2" height="8" viewBox="0 0 9.2 8"><path d="M2.4 0.6L4.6 1.6L3 7.6L0.4 6.4Z" fill="#9fbce6"/><path d="M5.8 0.4L8.8 1.8L7 7.6L4 6.4Z" fill="#a9c3e8"/><path d="M4.6 1.6L5.8 0.4L4 6.4L3 7.6Z" fill="#c5d6f0"/></svg>
<svg style="left:212.3px;top:38.2px" width="11.6" height="10.4" viewBox="0 0 11.6 10.4"><path d="M4.4 1.6H9.4L11 3.2V10H4.4Z" fill="#eaf1fb" stroke="#2a55b4" stroke-width="0.9"/><path d="M6 4.6H9.4M6 6.4H9.4M6 8.2H9.4" stroke="#7ea3de" stroke-width="0.8"/><path d="M0.4 0.4L4.6 4.4M4.4 0.4L0.6 4.4M2.5 0V5" stroke="#e9c829" stroke-width="1"/><rect x="2.4" y="6.8" width="1.6" height="1.6" fill="#2fb457"/><rect x="2.6" y="4.6" width="1.4" height="1.4" fill="#222"/></svg>
<svg style="left:237px;top:38.3px" width="11.4" height="10.2" viewBox="0 0 11.4 10.2"><rect x="0.6" y="0.6" width="10.2" height="9" fill="#e8eefa" stroke="#2a55b4" stroke-width="1.2"/><path d="M0.6 2.6H10.8M3.2 2.6V9.6" stroke="#2a55b4" stroke-width="1"/><path d="M4.6 5H6.8V7.6H9" stroke="#1b2f66" stroke-width="0.9" fill="none"/></svg>
<svg style="left:253px;top:38.3px" width="10.8" height="9" viewBox="0 0 10.8 9"><rect x="0.4" y="0.4" width="10" height="7.8" fill="#dfe8f8" stroke="#7ea3de" stroke-width="0.8"/><path d="M0.4 3H10.4" stroke="#2a55b4" stroke-width="1.2"/><path d="M3.6 0.4V3M7.2 0.4V3" stroke="#2a55b4" stroke-width="0.8"/><path d="M5.4 0.6V7M3.6 5.4L5.4 7.6L7.2 5.4Z" stroke="#16357e" stroke-width="1.1" fill="#16357e"/></svg>
<svg style="left:270.5px;top:37.7px" width="11.4" height="10.8" viewBox="0 0 11.4 10.8"><rect x="0.4" y="0.4" width="10.6" height="10" fill="#3d64c2"/><rect x="2.5" y="0" width="1.7" height="10.8" fill="#f4f7fd"/><rect x="7.2" y="0" width="1.7" height="10.8" fill="#f4f7fd"/><rect x="0" y="2.6" width="11.4" height="1.2" fill="#e3eaf8"/><rect x="0" y="7" width="11.4" height="1.2" fill="#e3eaf8"/><rect x="4.2" y="3.8" width="3" height="3.2" fill="#f4f7fd"/><rect x="1.4" y="3.8" width="1.1" height="3.2" fill="#d4d0c8"/><rect x="8.9" y="3.8" width="1.1" height="3.2" fill="#d4d0c8"/></svg>
<svg style="left:0px;top:57px" width="6" height="11.6" viewBox="0 0 6 11.6"><path d="M0 0.6C3.4 0 5.6 2.4 5.4 5.6C5.2 8.8 3 11.4 0 11Z" fill="#2253c6"/><path d="M0.6 2C2.4 2.2 3.4 3.4 3.2 5.2" stroke="#dfe9fb" stroke-width="1.2" fill="none"/></svg>
<svg style="left:18.7px;top:57.6px" width="10.8" height="11.6" viewBox="0 0 10.8 11.6"><path d="M0.4 1.2L3 0.4M1.6 0.2L3.2 2.6" stroke="#2b2f3a" stroke-width="0.9"/><rect x="2.2" y="3.6" width="8" height="7.4" fill="#eef3fc" stroke="#2a55b4" stroke-width="1"/><path d="M2.2 4.4H10.2" stroke="#2a55b4" stroke-width="1.6"/><path d="M4 7.6H8.6" stroke="#7ea3de" stroke-width="0.9"/></svg>
<svg style="left:35.6px;top:57.6px" width="12.6" height="10.8" viewBox="0 0 12.6 10.8"><path d="M0.4 1.2L3 0.4M1.6 0.2L3.2 2.6" stroke="#2b2f3a" stroke-width="0.9"/><rect x="0.8" y="2.6" width="4.6" height="5.6" fill="#eef3fc" stroke="#2a55b4" stroke-width="1"/><path d="M0.8 3.4000000000000004H5.3999999999999995" stroke="#2a55b4" stroke-width="1.6"/><rect x="7" y="5.2" width="5" height="5.2" fill="#eef3fc" stroke="#2a55b4" stroke-width="1"/><path d="M7 6.0H12" stroke="#2a55b4" stroke-width="1.6"/><path d="M5.4 6H7" stroke="#2a55b4" stroke-width="0.8"/></svg>
<svg style="left:53px;top:57.8px" width="12.8" height="10.6" viewBox="0 0 12.8 10.6"><path d="M1.2 1L3 0.3M2 0L3.2 2" stroke="#a29f98" stroke-width="0.8"/><rect x="2" y="3" width="10" height="7" fill="#cdcac3" stroke="#a29f98" stroke-width="0.9"/><path d="M2 5H12M5 3V1.6H9V3" stroke="#a29f98" stroke-width="0.9" fill="none"/><path d="M4.6 7.4H9.6" stroke="#c2bfb8" stroke-width="0.9"/></svg>
<svg style="left:71px;top:57.6px" width="12.8" height="11.2" viewBox="0 0 12.8 11.2"><path d="M0.4 1.2L3 0.4M1.6 0.2L3.2 2.6" stroke="#2b2f3a" stroke-width="0.9"/><rect x="4.2" y="0.8" width="4.6" height="3.8" fill="#eaf0fb" stroke="#2a55b4" stroke-width="1"/><rect x="1.1" y="6.8" width="4.2" height="4" fill="#eaf0fb" stroke="#1b3a86" stroke-width="1"/><rect x="7.8" y="6.8" width="4.2" height="4" fill="#eaf0fb" stroke="#1b3a86" stroke-width="1"/><path d="M6.5 4.6V5.8M3.2 6.8V5.8H9.9V6.8" stroke="#1b3a86" stroke-width="0.8" fill="none"/></svg>
<svg style="left:93.6px;top:57px" width="12.6" height="12" viewBox="0 0 12.6 12"><rect x="0.6" y="2" width="4.4" height="4.6" fill="#eef3fc" stroke="#2a55b4" stroke-width="1"/><path d="M0.6 2.8H5.0" stroke="#2a55b4" stroke-width="1.6"/><rect x="6.6" y="5.6" width="4.6" height="5.4" fill="#eef3fc" stroke="#2a55b4" stroke-width="1"/><path d="M6.6 6.3999999999999995H11.2" stroke="#2a55b4" stroke-width="1.6"/><path d="M9.6 0L12.0 1.6L9.4 4.6L7.800000000000001 3.4Z" fill="#dfe3ea" stroke="#8b8f98" stroke-width="0.6"/><path d="M8.0 3.6L6.2 6.6L8.8 5.6Z" fill="#f3e23a"/><rect x="6.8" y="6.6" width="1" height="1" fill="#2fb457"/></svg>
<svg style="left:111.7px;top:57px" width="12.8" height="12" viewBox="0 0 12.8 12"><path d="M9.6 0L12.0 1.6L9.4 4.6L7.800000000000001 3.4Z" fill="#dfe3ea" stroke="#8b8f98" stroke-width="0.6"/><path d="M8.0 3.6L6.2 6.6L8.8 5.6Z" fill="#f3e23a"/><rect x="6.8" y="6.6" width="1" height="1" fill="#2fb457"/><path d="M1.4 7.6L2.6 6.6V11.2" stroke="#1b3a86" stroke-width="1.1" fill="none"/><path d="M4.4 10.8L4 12" stroke="#1b3a86" stroke-width="0.9"/><ellipse cx="6.8" cy="9.6" rx="1.1" ry="1.5" fill="none" stroke="#1b3a86" stroke-width="0.9"/><ellipse cx="10.4" cy="9.6" rx="1.1" ry="1.5" fill="none" stroke="#1b3a86" stroke-width="0.9"/></svg>
<svg style="left:129px;top:57px" width="13" height="12" viewBox="0 0 13 12"><ellipse cx="5.4" cy="7.8" rx="5" ry="3.2" fill="none" stroke="#2a55b4" stroke-width="1.2"/><ellipse cx="6" cy="8" rx="2.4" ry="1.4" fill="#7ea3de" stroke="#2a55b4" stroke-width="0.8"/><path d="M10.0 0L12.399999999999999 1.6L9.8 4.6L8.2 3.4Z" fill="#dfe3ea" stroke="#8b8f98" stroke-width="0.6"/><path d="M8.4 3.6L6.6 6.6L9.2 5.6Z" fill="#f3e23a"/><rect x="7.199999999999999" y="6.6" width="1" height="1" fill="#2fb457"/></svg>
<svg style="left:146.9px;top:57.2px" width="12.2" height="12" viewBox="0 0 12.2 12"><rect x="0.8" y="2.8" width="8.4" height="8.2" fill="#eef3fc" stroke="#2a55b4" stroke-width="1"/><path d="M0.8 3.5999999999999996H9.200000000000001" stroke="#2a55b4" stroke-width="1.6"/><path d="M2.4 7H7.8M2.4 9H7.8" stroke="#7ea3de" stroke-width="0.8"/><path d="M9.0 0L11.399999999999999 1.6L8.8 4.6L7.199999999999999 3.4Z" fill="#dfe3ea" stroke="#8b8f98" stroke-width="0.6"/><path d="M7.3999999999999995 3.6L5.6 6.6L8.2 5.6Z" fill="#f3e23a"/><rect x="6.199999999999999" y="6.6" width="1" height="1" fill="#2fb457"/></svg>
<svg style="left:163.7px;top:57px" width="12.4" height="12" viewBox="0 0 12.4 12"><rect x="3.8000000000000003" y="1.4" width="4.6" height="3.8" fill="#eaf0fb" stroke="#2a55b4" stroke-width="1"/><rect x="0.7" y="7.4" width="4.2" height="4" fill="#eaf0fb" stroke="#1b3a86" stroke-width="1"/><rect x="7.4" y="7.4" width="4.2" height="4" fill="#eaf0fb" stroke="#1b3a86" stroke-width="1"/><path d="M6.1000000000000005 5.199999999999999V6.4M2.8000000000000003 7.4V6.4H9.5V7.4" stroke="#1b3a86" stroke-width="0.8" fill="none"/><path d="M9.4 0L11.8 1.6L9.2 4.6L7.6 3.4Z" fill="#dfe3ea" stroke="#8b8f98" stroke-width="0.6"/><path d="M7.8 3.6L6 6.6L8.6 5.6Z" fill="#f3e23a"/><rect x="6.6" y="6.6" width="1" height="1" fill="#2fb457"/></svg>
<svg style="left:185.4px;top:57.6px" width="6.2" height="10.4" viewBox="0 0 6.2 10.4"><circle cx="3" cy="2.6" r="2.1" fill="#f8e6da" stroke="#dda888" stroke-width="0.9"/><path d="M3 4.8V9.8M3 7.4H4.8M3 9.2H4.6" stroke="#e0ae90" stroke-width="1.2" fill="none"/><circle cx="3" cy="2.4" r="0.6" fill="#fff"/></svg>
<svg style="left:206px;top:57.6px" width="12.4" height="11" viewBox="0 0 12.4 11"><path d="M1 6L4.4 9.6L11.6 1.6" stroke="#22a043" stroke-width="2.2" fill="none"/><rect x="5" y="1.2" width="4" height="3.2" fill="#2a55b4"/><circle cx="3.8" cy="5.2" r="1.4" fill="#c7352b"/><circle cx="3.4" cy="4.8" r="0.5" fill="#fff"/></svg>
<svg style="left:230px;top:57.4px" width="11.6" height="11.6" viewBox="0 0 11.6 11.6"><ellipse cx="3.4" cy="8.6" rx="3" ry="2.2" fill="none" stroke="#3a6fd2" stroke-width="1.3"/><ellipse cx="7.8" cy="8.6" rx="3" ry="2.2" fill="none" stroke="#3a6fd2" stroke-width="1.3"/><circle cx="3.6" cy="3.4" r="2" fill="#8fb2e8"/><rect x="6" y="0.4" width="3.6" height="3.2" fill="#c9403a"/><rect x="5.6" y="3.6" width="3.8" height="2.8" fill="#2fae4e"/><circle cx="7.8" cy="1.8" r="0.7" fill="#f4dede"/></svg>
<svg style="left:247.6px;top:57.4px" width="11.6" height="11.6" viewBox="0 0 11.6 11.6"><ellipse cx="3.8" cy="8.6" rx="3" ry="2.2" fill="none" stroke="#8fb2e8" stroke-width="1.3"/><ellipse cx="8.2" cy="8.6" rx="3" ry="2.2" fill="none" stroke="#8fb2e8" stroke-width="1.3"/><circle cx="4.0" cy="3.4" r="2" fill="#8fb2e8"/><rect x="6.4" y="0.4" width="3.6" height="3.2" fill="#c9403a"/><rect x="6.0" y="3.6" width="3.8" height="2.8" fill="#2fae4e"/><circle cx="8.2" cy="1.8" r="0.7" fill="#f4dede"/><path d="M0.6 10.4L5.4 2.6" stroke="#262626" stroke-width="1"/><rect x="4.6" y="4.4" width="2.4" height="2.6" fill="#161616"/><path d="M0.4 9.6L1.8 10.8" stroke="#e9c81c" stroke-width="1.4"/></svg>
<div style="position:absolute;left:0px;top:0px;width:1px;height:524px;background:#f4f4f2;"></div>
</div>
</body></html>
